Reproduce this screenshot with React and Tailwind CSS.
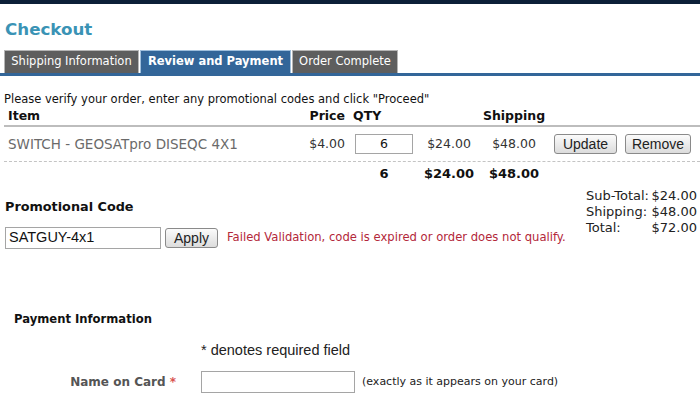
import React from 'react';

const verdana = { fontFamily: '"DejaVu Sans", Verdana, sans-serif' };

const Tab = ({ label, active, className = '' }) => (
  <div
    className={
      (active
        ? 'h-[23px] flex items-center justify-center bg-[#336699] border border-b-0 border-[#9fbfdc] text-white font-bold text-[11.5px] '
        : 'h-[23px] flex items-center justify-center bg-[#5e5e5e] border border-b-0 border-[#b5b5b5] text-white text-[11.5px] ') + className
    }
  >
    {label}
  </div>
);

const OldButton = ({ children, className = '' }) => (
  <button
    className={`h-[20px] rounded-[3px] border border-[#8a8a8a] bg-gradient-to-b from-[#fbfbfb] to-[#dcdcdc] text-[14px] text-[#222] leading-none font-['Liberation_Sans',Arial,sans-serif] ${className}`}
  >
    {children}
  </button>
);

export default function App() {
  return (
    <div className="w-[700px] h-[400px] bg-white overflow-hidden text-[#111]" style={verdana}>
      <div className="h-[4px] bg-[#0c2038]" />

      <h1 className="pl-[5px] pt-[14px] text-[16.7px] font-bold text-[#3a93b5] leading-[22px]">Checkout</h1>

      {/* tabs */}
      <div className="mt-[10px] pl-[4px] flex gap-[1px]">
        <Tab label="Shipping Information" className="w-[135px]" />
        <Tab label="Review and Payment" active className="w-[151px]" />
        <Tab label="Order Complete" className="w-[106px]" />
      </div>
      <div className="h-[3px] bg-[#336699]" />

      <div className="pl-[4px]">
        <p className="mt-[16px] text-[11.5px] leading-[14px]">
          Please verify your order, enter any promotional codes and click "Proceed"
        </p>

        {/* header row */}
        <div className="mt-[2px] flex text-[12.5px] font-bold leading-[16px] pb-[1px] border-b-2 border-[#bdbdbd]">
          <div className="w-[297px] pl-[4px]">Item</div>
          <div className="w-[44px] text-right">Price</div>
          <div className="w-[74px] pl-[8px]">QTY</div>
          <div className="w-[60px]" />
          <div className="w-[70px] text-center">Shipping</div>
        </div>

        {/* item row */}
        <div className="flex items-center h-[35px] text-[12.5px] border-b border-dashed border-[#c4c4c4]">
          <div className="w-[297px] pl-[4px] text-[13.5px] text-[#6a6a6a]">SWITCH - GEOSATpro DISEQC 4X1</div>
          <div className="w-[44px] text-right text-[#333]">$4.00</div>
          <div className="w-[74px] pl-[10px]">
            <div className="w-[58px] h-[20px] border border-[#a5a5a5] flex items-center justify-center">6</div>
          </div>
          <div className="w-[60px] text-center text-[#333]">$24.00</div>
          <div className="w-[70px] text-center text-[#333]">$48.00</div>
          <div className="flex gap-[8px] pl-[5px]">
            <OldButton className="w-[63px]">Update</OldButton>
            <OldButton className="w-[66px]">Remove</OldButton>
          </div>
        </div>

        {/* totals row */}
        <div className="flex h-[24px] items-center text-[13px] font-bold">
          <div className="w-[341px]" />
          <div className="w-[74px] pl-[10px]"><div className="w-[58px] text-center">6</div></div>
          <div className="w-[60px] text-center">$24.00</div>
          <div className="w-[70px] text-center">$48.00</div>
        </div>
      </div>

      {/* promo + subtotal */}
      <div className="flex justify-between pl-[5px] pr-[3px]">
        <div>
          <div className="mt-[13px] text-[12.8px] font-bold leading-[16px]">Promotional Code</div>
          <div className="mt-[12px] flex items-center">
            <div className="w-[156px] h-[22px] border border-[#a5a5a5] flex items-center pl-[3px] text-[14.5px] font-['Liberation_Sans',Arial,sans-serif]">SATGUY-4x1</div>
            <OldButton className="ml-[4px] w-[53px]">Apply</OldButton>
            <span className="ml-[9px] text-[11.6px] text-[#b3273a]">Failed Validation, code is expired or order does not qualify.</span>
          </div>
        </div>
        <div className="pt-[2px] text-[13px] leading-[16px] text-[#222]">
          <div className="flex justify-between w-[111px]"><span>Sub-Total:</span><span>$24.00</span></div>
          <div className="flex justify-between w-[111px]"><span>Shipping:</span><span>$48.00</span></div>
          <div className="flex justify-between w-[111px]"><span>Total:</span><span>$72.00</span></div>
        </div>
      </div>

      {/* payment */}
      <div className="mt-[63px] pl-[14px] text-[11.6px] font-bold leading-[14px]">Payment Information</div>
      <div className="mt-[16px] pl-[201px] text-[14.5px] leading-[17px] font-['Liberation_Sans',Arial,sans-serif] text-[#222]">* denotes required field</div>
      <div className="mt-[12px] flex items-center">
        <div className="w-[201px] text-right pr-[25px] text-[12px] font-bold text-[#555]">
          Name on Card <span className="text-[#d9534f]">*</span>
        </div>
        <div className="w-[154px] h-[22px] border border-[#a5a5a5]" />
        <span className="ml-[7px] text-[11px] text-[#222]">(exactly as it appears on your card)</span>
      </div>
    </div>
  );
}
